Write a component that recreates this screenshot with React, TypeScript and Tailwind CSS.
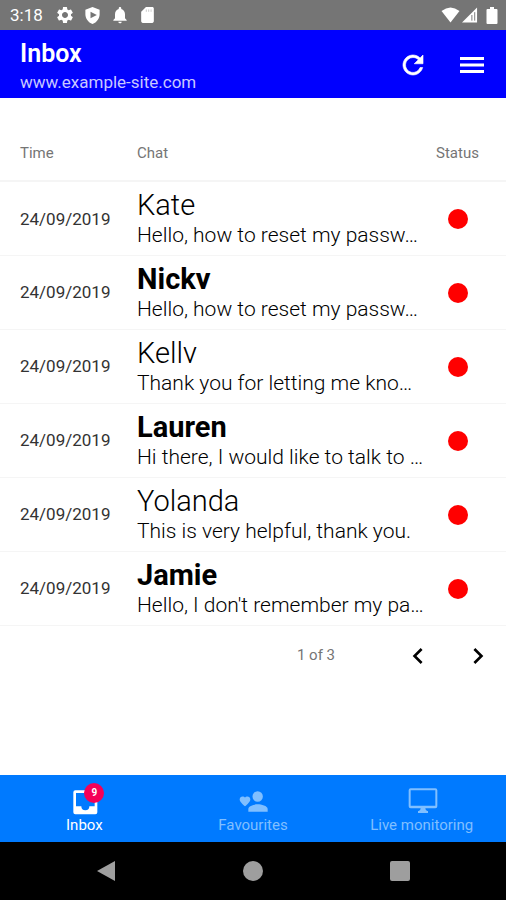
import type { ReactNode } from "react";
import { MdChevronLeft, MdChevronRight, MdNotifications, MdSettings } from "react-icons/md";

type Chat = { name: string; time: string; message: string; unread: boolean };

const chats: Chat[] = [
  { name: "Kate", time: "24/09/2019", message: "Hello, how to reset my passw…", unread: false },
  { name: "Nicky", time: "24/09/2019", message: "Hello, how to reset my passw…", unread: true },
  { name: "Kelly", time: "24/09/2019", message: "Thank you for letting me kno…", unread: false },
  { name: "Lauren", time: "24/09/2019", message: "Hi there, I would like to talk to …", unread: true },
  { name: "Yolanda", time: "24/09/2019", message: "This is very helpful, thank you.", unread: false },
  { name: "Jamie", time: "24/09/2019", message: "Hello, I don't remember my pa…", unread: true },
];

function StatusBar() {
  return (
    <div className="flex h-[30px] items-center justify-between bg-[#757575] pr-2 pl-2.5 text-white">
      <div className="flex items-center gap-2">
        <span className="mr-1 text-[17px] leading-5">3:18</span>
        <MdSettings size={20} />
        <svg width="19" height="20" viewBox="0 0 24 24" fill="currentColor" fillRule="evenodd" aria-hidden="true">
          <path d="M12 2 3 5.500V11c0 5.500 3.500 10 9 12.500 5.500-2.500 9-7 9-12.500V5.500ZM9.500 8l8 4-8 4Z" />
        </svg>
        <MdNotifications size={20} />
        <svg width="19" height="20" viewBox="0 0 24 24" fill="currentColor" aria-hidden="true">
          <path d="M18 2h-8L4 8v12c0 1.100.9 2 2 2h12c1.100 0 2-.9 2-2V4c0-1.100-.9-2-2-2Z" />
          <path d="M10.500 5v3M13.500 5v3M16.500 5v3" stroke="#bdbdbd" strokeWidth="1" />
        </svg>
      </div>
      <div className="flex items-center gap-0.5">
        <svg width="19" height="16" viewBox="0 0 19 16" fill="currentColor" aria-hidden="true">
          <path d="M.5 4Q9.500-3 18.500 4L9.500 15.500Z" />
        </svg>
        <svg width="16" height="16" viewBox="0 0 17 16" aria-hidden="true">
          <path d="M16 0v16H0Z" fill="#fff" />
          <path d="M10.500 8v6M13.500 5v9" stroke="#757575" strokeWidth="1" />
        </svg>
        <svg className="ml-1.5" width="12" height="17" viewBox="0 0 12 17" fill="currentColor" aria-hidden="true">
          <path d="M4 0h4v2h2.500q1 0 1 1v13q0 1-1 1h-9q-1 0-1-1V3q0-1 1-1H4Z" />
        </svg>
      </div>
    </div>
  );
}

function AppBar() {
  return (
    <header className="flex h-[68px] items-center justify-between bg-[#0000ff] pr-[22px] pl-5 text-white">
      <div className="pt-1">
        <h1 className="text-[25px] leading-8 font-semibold">Inbox</h1>
        <p className="text-[17px] leading-6 text-[#c8c8ff]">www.example-site.com</p>
      </div>
      <div className="flex items-center gap-8 pt-0.5">
        <button type="button" aria-label="Refresh">
          <svg width="30" height="30" viewBox="0 0 24 24" fill="currentColor" stroke="currentColor" strokeWidth="0.5">
            <path d="M17.650 6.350A8 8 0 1 0 19.730 14h-2.080A6 6 0 1 1 12 6c1.660 0 3.140.69 4.220 1.780L13 11h7V4Z" />
          </svg>
        </button>
        <button type="button" aria-label="Menu">
          <svg width="24" height="30" viewBox="0 0 24 30" fill="currentColor">
            <path d="M0 7h24v3H0ZM0 13.500h24v3H0ZM0 20h24v3H0Z" />
          </svg>
        </button>
      </div>
    </header>
  );
}

function ChatTable() {
  return (
    <table className="w-full table-fixed border-collapse">
      <thead>
        <tr className="h-[55px] border-b-2 border-[#f5f5f5] text-left text-[15px] text-[#757575]">
          <th className="w-[137px] pl-5 font-normal">Time</th>
          <th className="font-normal">Chat</th>
          <th className="w-[70px] font-normal">Status</th>
        </tr>
      </thead>
      <tbody>
        {chats.map((chat) => (
          <tr key={chat.name} className="h-[74px] border-b border-[#f5f5f5]">
            <td className="pt-0.5 pl-5 text-[17px] text-[#333]">{chat.time}</td>
            <td className="whitespace-nowrap text-black">
              <div className={chat.unread ? "h-7 text-[29px] leading-9 font-bold" : "h-7 text-[29px] leading-9 font-light"}>
                {chat.name}
              </div>
              <div className="relative bg-white pt-1.5 text-[21px] leading-7 font-light">{chat.message}</div>
            </td>
            <td className="pt-0.5 pl-3">
              <span role="img" aria-label="Offline" className="block size-5 rounded-full bg-[#ff0000]" />
            </td>
          </tr>
        ))}
      </tbody>
    </table>
  );
}

function Tab({ label, active, children }: { label: string; active?: boolean; children: ReactNode }) {
  return (
    <button
      type="button"
      className={active ? "flex flex-1 flex-col items-center text-white" : "flex flex-1 flex-col items-center text-[#80bfff]"}
    >
      {children}
      <span className="text-[15px] leading-4">{label}</span>
    </button>
  );
}

function BottomTabs() {
  return (
    <nav className="flex h-[67px] items-center bg-[#007aff]">
      <Tab label="Inbox" active>
        <span className="relative">
          <svg width="32" height="32" viewBox="-1 -1 24 24" fill="currentColor" aria-hidden="true">
            <path d="M19.500 3h-15A1.500 1.500 0 0 0 3 4.500v15A1.500 1.500 0 0 0 4.500 21h15a1.500 1.500 0 0 0 1.500-1.500v-15A1.500 1.500 0 0 0 19.500 3Zm-.5 12h-4a3 3 0 0 1-6 0H5V5h14Z" />
          </svg>
          <span className="absolute -top-0.5 -right-1 flex size-5 items-center justify-center rounded-full bg-[#f50057] text-[10px] font-bold">
            9
          </span>
        </span>
      </Tab>
      <Tab label="Favourites">
        <svg width="32" height="32" viewBox="0 0 24 24" fill="currentColor" aria-hidden="true">
          <path d="M15.500 14.500c-2.500 0-7 1.200-7 3.500v2h14.500v-2c0-2.300-4.800-3.500-7.500-3.500M15.500 12.500a3.900 3.900 0 1 0 0-7.800 3.900 3.900 0 0 0 0 7.800M6 16l-.6-.5C3.400 13.600 2 12.400 2 10.900 2 9.700 3 8.700 4.200 8.700c.7 0 1.400.3 1.800.8.4-.5 1.100-.8 1.800-.8C9 8.700 10 9.700 10 10.900c0 1.500-1.400 2.700-3.400 4.600Z" />
        </svg>
      </Tab>
      <Tab label="Live monitoring">
        <svg width="32" height="32" viewBox="0 0 24 24" fill="currentColor" aria-hidden="true">
          <path d="M22 2.500H3.500A1.500 1.500 0 0 0 2 4v12a1.500 1.500 0 0 0 1.500 1.500H11q0 1.500-1.500 2H9V21h7.500v-1.500H16q-1.500-.5-1.500-2H22a1.500 1.500 0 0 0 1.500-1.500V4A1.500 1.500 0 0 0 22 2.500Zm0 13H3.500V4H22Z" />
        </svg>
      </Tab>
    </nav>
  );
}

function SystemNav() {
  return (
    <div className="flex h-[58px] items-center justify-around bg-black px-8 text-[#9e9e9e]">
      <button type="button" aria-label="Back">
        <svg width="20" height="22" viewBox="0 0 20 22" fill="currentColor">
          <path d="M19 1v20L1 11Z" />
        </svg>
      </button>
      <button type="button" aria-label="Home" className="size-5 rounded-full bg-[#9e9e9e]" />
      <button type="button" aria-label="Recent apps" className="size-5 rounded-xs bg-[#9e9e9e]" />
    </div>
  );
}

export default function App() {
  return (
    <div className="flex min-h-screen flex-col bg-white font-[Roboto,'Liberation_Sans',sans-serif]">
      <StatusBar />
      <AppBar />
      <main className="flex-1 pt-7">
        <ChatTable />
        <div className="flex h-[60px] items-center justify-end pr-3 text-[#757575]">
          <span className="text-[15px]">1 of 3</span>
          <button type="button" aria-label="Previous page" className="ml-[67px] text-black">
            <MdChevronLeft size={32} />
          </button>
          <button type="button" aria-label="Next page" className="ml-7 text-black">
            <MdChevronRight size={32} />
          </button>
        </div>
      </main>
      <BottomTabs />
      <SystemNav />
    </div>
  );
}
